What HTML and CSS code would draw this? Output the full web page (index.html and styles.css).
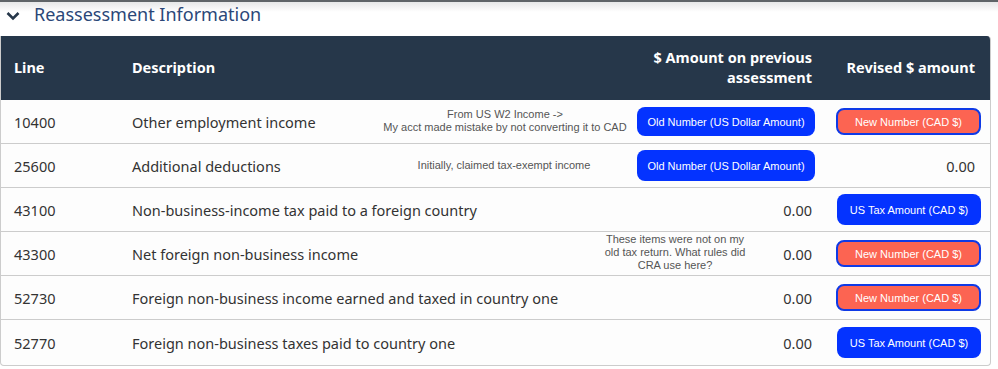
FILE: index.html
```html
<!DOCTYPE html>
<html>
<head>
<meta charset="utf-8">
<link rel="stylesheet" href="styles.css">
</head>
<body>
<div class="page">
  <div class="topbar"></div>
  <div class="section-title">
    <svg class="chevron" width="14" height="10" viewBox="0 0 14 10"><path d="M1.5 2 L7 7.5 L12.5 2" fill="none" stroke="#26374a" stroke-width="2.6"/></svg>
    <span>Reassessment Information</span>
  </div>
  <div class="table">
    <div class="row head">
      <div class="cell c-line">Line</div>
      <div class="cell c-desc">Description</div>
      <div class="cell c-amt">$ Amount on previous assessment</div>
      <div class="cell c-rev">Revised $ amount</div>
    </div>
    <div class="row">
      <div class="cell c-line">10400</div>
      <div class="cell c-desc">Other employment income</div>
      <div class="note note-a">From US W2 Income -&gt;<br>My acct made mistake by not converting it to CAD</div>
      <div class="cell c-amt"><span class="btn blue wide">Old Number (US Dollar Amount)</span></div>
      <div class="cell c-rev"><span class="btn red">New Number (CAD $)</span></div>
    </div>
    <div class="row">
      <div class="cell c-line">25600</div>
      <div class="cell c-desc">Additional deductions</div>
      <div class="note note-b">Initially, claimed tax-exempt income</div>
      <div class="cell c-amt"><span class="btn blue wide tall">Old Number (US Dollar Amount)</span></div>
      <div class="cell c-rev">0.00</div>
    </div>
    <div class="row">
      <div class="cell c-line">43100</div>
      <div class="cell c-desc">Non-business-income tax paid to a foreign country</div>
      <div class="cell c-amt">0.00</div>
      <div class="cell c-rev"><span class="btn blue tall">US Tax Amount (CAD $)</span></div>
    </div>
    <div class="row">
      <div class="cell c-line">43300</div>
      <div class="cell c-desc">Net foreign non-business income</div>
      <div class="note note-c">These items were not on my<br>old tax return. What rules did<br>CRA use here?</div>
      <div class="cell c-amt">0.00</div>
      <div class="cell c-rev"><span class="btn red">New Number (CAD $)</span></div>
    </div>
    <div class="row">
      <div class="cell c-line">52730</div>
      <div class="cell c-desc">Foreign non-business income earned and taxed in country one</div>
      <div class="cell c-amt">0.00</div>
      <div class="cell c-rev"><span class="btn red">New Number (CAD $)</span></div>
    </div>
    <div class="row last">
      <div class="cell c-line">52770</div>
      <div class="cell c-desc">Foreign non-business taxes paid to country one</div>
      <div class="cell c-amt">0.00</div>
      <div class="cell c-rev"><span class="btn blue tall">US Tax Amount (CAD $)</span></div>
    </div>
  </div>
</div>
</body>
</html>
```

FILE: styles.css
```css
html, body {
  margin: 0;
  padding: 0;
  background: #ffffff;
}
body {
  font-family: "Noto Sans", "Open Sans", sans-serif;
  color: #333333;
  width: 998px;
  height: 369px;
  overflow: hidden;
}
.page {
  width: 998px;
}
.topbar {
  height: 10px;
  border-top: 2px solid #5f6468;
  background: linear-gradient(#e6e7e8, #ffffff);
  margin-bottom: -12px;
}
.section-title {
  height: 36px;
  display: flex;
  align-items: flex-start;
  padding: 2px 0 0 6px;
  gap: 14px;
  color: #2b4778;
  font-size: 18px;
  line-height: 24px;
  box-sizing: border-box;
}
.chevron {
  flex: none;
  margin-top: 9px;
}
.table {
  width: 989px;
  border: 1px solid #cccccc;
  border-top: none;
  border-radius: 0 4px 4px 4px;
  overflow: hidden;
  background: #fdfdfd;
}
.row {
  position: relative;
  display: grid;
  grid-template-columns: 118px 512px 196px 162px;
  height: 44px;
  box-sizing: border-box;
  border-bottom: 1px solid #cccccc;
  align-items: center;
  font-size: 14.5px;
}
.row.last {
  border-bottom: none;
  height: 45px;
}
.row.head {
  height: 64px;
  padding-bottom: 3px;
  background: #26374a;
  color: #ffffff;
  font-weight: 700;
  border-bottom: none;
  line-height: 20px;
}
.cell {
  padding: 0 13px;
}
.c-amt {
  text-align: right;
  padding: 0 15px 0 15px;
  display: flex;
  justify-content: flex-end;
}
.row.head .c-amt {
  display: block;
}
.c-rev {
  text-align: right;
  padding: 0 14px 0 8px;
  display: flex;
  justify-content: flex-end;
}
.row.head .c-rev {
  display: block;
}
.note {
  position: absolute;
  font-family: "Liberation Sans", Arial, sans-serif;
  font-size: 11px;
  line-height: 13px;
  color: #555555;
  text-align: center;
  transform: translateX(-50%);
}
.note-a { left: 504px; top: 8px; }
.note-b { left: 503px; top: 15px; }
.note-c { left: 674px; top: 1px; }
.btn {
  display: inline-flex;
  align-items: center;
  justify-content: center;
  font-family: "Liberation Sans", Arial, sans-serif;
  font-size: 11px;
  color: #ffffff;
  border-radius: 8px;
  box-sizing: border-box;
  flex: none;
}
.btn.blue {
  background: #0433ff;
  width: 144px;
  height: 29px;
  margin-right: -6px;
}
.btn.blue.wide {
  width: 178px;
  margin-right: -3px;
}
.btn.tall {
  height: 31px;
}
.btn.red {
  background: #fc6452;
  border: 2px solid #0f3ae6;
  width: 145px;
  height: 27px;
  margin-right: -6px;
}
```
